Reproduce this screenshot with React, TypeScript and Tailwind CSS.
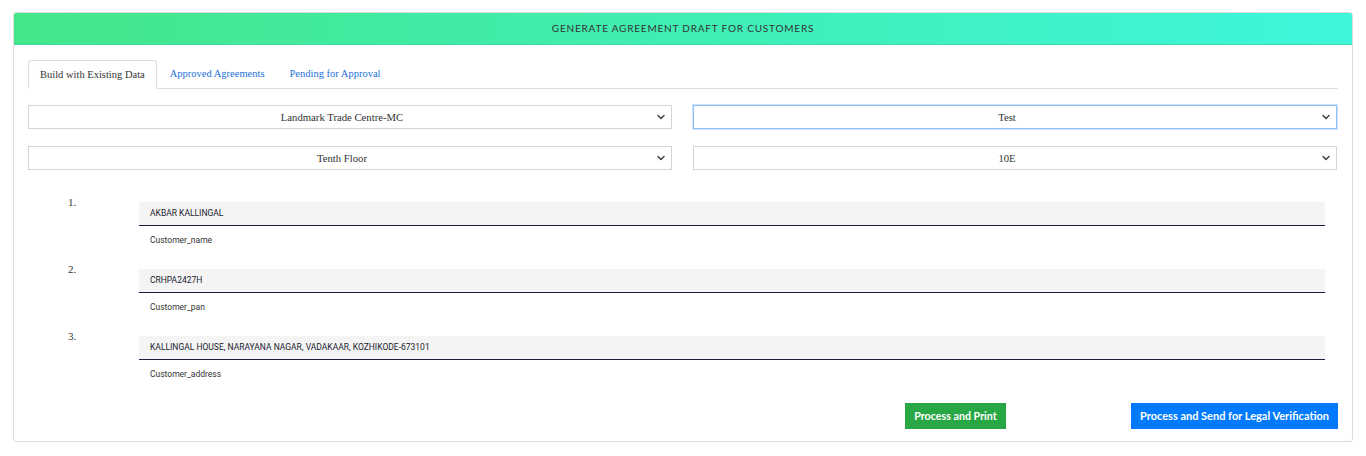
import { ChevronDown } from 'lucide-react'

const fields = [
  { value: 'AKBAR KALLINGAL', label: 'Customer_name' },
  { value: 'CRHPA2427H', label: 'Customer_pan' },
  { value: 'KALLINGAL HOUSE, NARAYANA NAGAR, VADAKAAR, KOZHIKODE-673101', label: 'Customer_address' },
]

function Select({ value, focused }: { value: string; focused?: boolean }) {
  return (
    <div
      className={
        'flex h-[24px] items-center border bg-white ' +
        (focused ? 'border-[#8dc0f5] shadow-[0_0_0_1px_#cfe4fb]' : 'border-[#d4d4d4]')
      }
    >
      <span className="flex-1 text-center text-[10.7px] text-[#333]">{value}</span>
      <span className="flex w-[16px] items-center pr-[4px]">
        <ChevronDown size={12} strokeWidth={3} className="text-[#444]" />
      </span>
    </div>
  )
}

export default function App() {
  return (
    <div className="min-h-screen bg-white pt-[12px] font-['Liberation_Serif',serif]">
      <div className="ml-[13px] w-[1340px] overflow-hidden rounded-[3px] border border-[#dcdcdc]">
        {/* Header */}
        <div className="flex h-[32px] items-center justify-center border-b border-[#3fd7a4] bg-gradient-to-r from-[#44e689] to-[#3ef6db]">
          <span className="font-['Lato',sans-serif] text-[10px] tracking-[0.8px] text-[#333]">
            GENERATE AGREEMENT DRAFT FOR CUSTOMERS
          </span>
        </div>

        <div className="px-[14px] pt-[15px] pb-[12px]">
          {/* Tabs */}
          <div className="flex h-[29px] border-b border-[#dedede]">
            <div className="-mb-px flex items-center rounded-t-[3px] border border-b-white border-[#dedede] bg-white px-[11px] text-[10.5px] text-[#333]">
              Build with Existing Data
            </div>
            <div className="flex items-center border border-transparent px-[12px] text-[10.5px] text-[#1a6fd8]">
              Approved Agreements
            </div>
            <div className="flex items-center border border-transparent px-[11px] text-[10.5px] text-[#1a6fd8]">
              Pending for Approval
            </div>
          </div>

          {/* Selects */}
          <div className="mt-[16px] grid w-[1309px] grid-cols-2 gap-x-[21px] gap-y-[17px]">
            <Select value="Landmark Trade Centre-MC" />
            <Select value="Test" focused />
            <Select value="Tenth Floor" />
            <Select value="10E" />
          </div>

          {/* Fields */}
          <div className="mt-[32px] pl-[40px] pr-[13px]">
            {fields.map((f, i) => (
              <div key={f.label} className="flex">
                <div className="-mt-[6px] w-[71px] text-[11px] leading-[12px] text-[#333]">{i + 1}.</div>
                <div className="flex-1 font-['Roboto',sans-serif]">
                  <div className="flex h-[24px] items-center border-b border-[#1c1c3d] bg-[#f4f4f4] px-[11px] text-[8.5px] text-[#1a1a2e]">
                    {f.value}
                  </div>
                  <div className="mt-[8px] mb-[23px] px-[11px] text-[8.5px] leading-[12px] text-[#333]">{f.label}</div>
                </div>
              </div>
            ))}
          </div>

          {/* Actions */}
          <div className="flex justify-end gap-[125px] font-['Lato',sans-serif]">
            <button className="h-[26px] w-[101px] bg-[#28a745] text-[10.7px] font-bold text-white">
              Process and Print
            </button>
            <button className="h-[26px] w-[207px] bg-[#007bff] text-[11px] font-bold text-white">
              Process and Send for Legal Verification
            </button>
          </div>
        </div>
      </div>
    </div>
  )
}
